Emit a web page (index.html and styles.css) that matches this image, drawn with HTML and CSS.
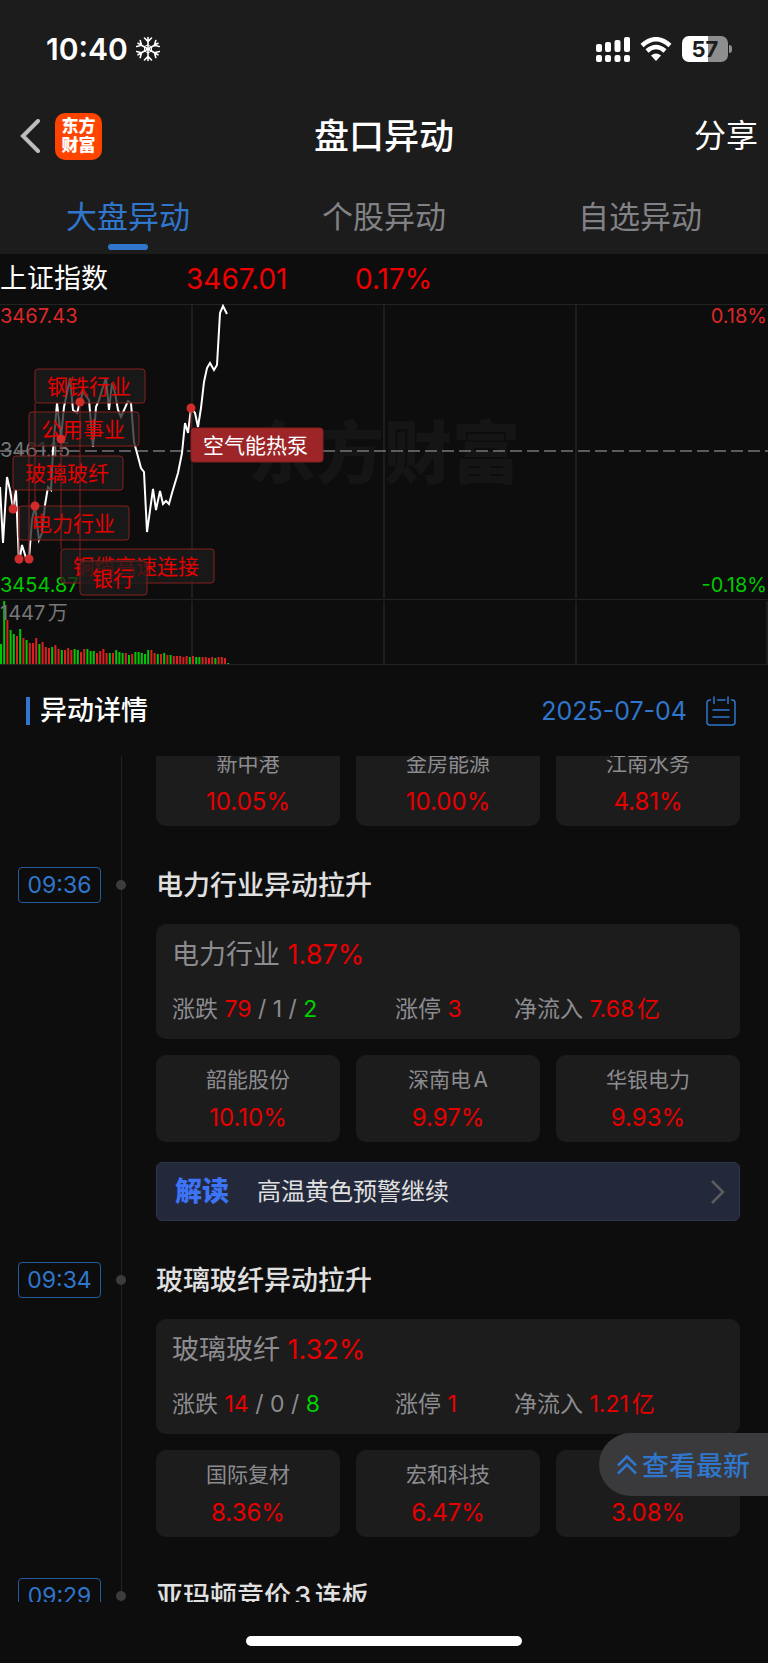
FILE: index.html
```
<!DOCTYPE html>
<html lang="zh-CN">
<head>
    <meta charset="UTF-8">
    <meta name="viewport" content="width=device-width, initial-scale=1.0">
    <title>盘口异动</title>
    <link rel="stylesheet" href="styles.css">
</head>
<body>

<header class="top">
    <div class="status-bar">
        <div class="status-time">
            <span>10:40</span>
            <svg width="24" height="26" viewBox="-12 -13 24 26" fill="none" stroke="#fff" stroke-width="1.600" stroke-linecap="round">
                <g id="arm"><path d="M0 0V-11.500M-3.500-11L0-7.500L3.500-11"/></g>
                <use href="#arm" transform="rotate(60)"/>
                <use href="#arm" transform="rotate(120)"/>
                <use href="#arm" transform="rotate(180)"/>
                <use href="#arm" transform="rotate(240)"/>
                <use href="#arm" transform="rotate(300)"/>
                <path stroke-width="1" d="M0-4L3.500-2V2L0 4L-3.500 2V-2Z"/>
            </svg>
        </div>
        <div class="status-icons">
            <svg width="34" height="25" viewBox="0 0 34 25" fill="#fff">
                <rect x="0" y="7" width="6" height="8" rx="2"/>
                <rect x="9" y="5" width="6" height="10" rx="2"/>
                <rect x="18.500" y="3" width="6" height="12" rx="2"/>
                <rect x="28" y="0" width="6" height="15" rx="2"/>
                <rect x="0" y="18" width="6" height="7" rx="2"/>
                <rect x="9" y="18" width="6" height="7" rx="2"/>
                <rect x="18.500" y="18" width="6" height="7" rx="2"/>
                <rect x="28" y="18" width="6" height="7" rx="2"/>
            </svg>
            <svg width="32" height="25" viewBox="0 0 32 25">
                <path d="M2 8.500Q16-4 30 8.500" fill="none" stroke="#fff" stroke-width="4.500"/>
                <path d="M7 14Q16 6 25 14" fill="none" stroke="#fff" stroke-width="4.500"/>
                <path d="M16 24L11 18.500Q16 14.500 21 18.500Z" fill="#fff"/>
            </svg>
            <div class="battery"><span>57</span></div>
        </div>
    </div>
    <div class="nav-bar">
        <div class="nav-left">
            <button class="back-btn" aria-label="返回">
                <svg width="20" height="34" viewBox="0 0 20 34" fill="none" stroke="#bdbdbd" stroke-width="4" stroke-linecap="round">
                    <path d="M18 2L3 17L18 32"/>
                </svg>
            </button>
            <div class="logo">东方<br>财富</div>
        </div>
        <h1>盘口异动</h1>
        <button class="share-btn">分享</button>
    </div>
    <nav class="tabs">
        <button class="tab active">大盘异动</button>
        <button class="tab">个股异动</button>
        <button class="tab">自选异动</button>
    </nav>
</header>

<section class="quote">
    <div class="quote-row">
        <span class="quote-name">上证指数</span>
        <span class="quote-price">3467.01</span>
        <span class="quote-pct">0.17%</span>
    </div>
    <svg class="chart" viewBox="0 304 768 362">
        <text class="watermark" x="384" y="478">东方财富</text>

        <!-- grid -->
        <path class="grid-line" d="M0 304.500H768M0 599.500H768M0 664.500H768"/>
        <path class="grid-line thick" d="M192 305V598M384 305V598M576 305V598M192 601V664M384 601V664M576 601V664M767 601V664"/>
        <path class="mid-line" d="M0 451H768"/>

        <!-- axis values -->
        <text class="axis up" x="0" y="323">3467.43</text>
        <text class="axis up end" x="767" y="323">0.18%</text>
        <text class="axis" x="0" y="457">3461.15</text>
        <text class="axis down" x="0" y="592">3454.87</text>
        <text class="axis down end" x="767" y="592">-0.18%</text>

        <g id="volume"></g>
        <text class="axis" x="0" y="620">1447万</text>

        <polyline class="price-line" points="0,487 3,543 7,477 10,490 13,508 16,490 19,563 22,545 26,558 29,559 32,520 35,506 39,540 42,533 45,505 48,487 51,490 53,450 57,403 61,438 64,407 67,393 70,378 73,410 77,413 80,402 83,392 89,400 93,447 96,407 99,400 103,387 106,378 109,410 112,383 115,393 118,410 121,417 128,401 131,403 134,442 137,453 141,468 144,472 147,532 153,489 156,510 160,491 163,504 166,501 169,504 172,493 178,473 182,453 185,423 188,433 191,408 195,413 198,427 201,408 204,382 207,368 210,363 214,370 217,365 220,313 223,306 227,314"/>

        <!-- event labels -->
        <g class="event">
            <rect x="19" y="506" width="110" height="34" rx="3"/>
            <path d="M19 506V559"/>
            <text x="31" y="531">电力行业</text>
        </g>
        <g class="event">
            <rect x="13" y="456" width="110" height="34" rx="3"/>
            <path d="M13 490V509"/>
            <text x="25" y="481">玻璃玻纤</text>
        </g>
        <g class="event">
            <rect x="29" y="412" width="110" height="34" rx="3"/>
            <path d="M29 446V559"/>
            <text x="41" y="437">公用事业</text>
        </g>
        <g class="event">
            <rect x="35" y="369" width="110" height="34" rx="3"/>
            <path d="M35 403V506"/>
            <text x="47" y="394">钢铁行业</text>
        </g>
        <g class="event">
            <rect x="61" y="549" width="153" height="34" rx="3"/>
            <path d="M61 439V549"/>
            <text x="73" y="574">铜缆高速连接</text>
        </g>
        <g class="event">
            <rect x="80" y="561" width="67" height="34" rx="3"/>
            <path d="M80 402V561"/>
            <text x="92" y="586">银行</text>
        </g>
        <g class="event current">
            <rect x="191" y="428" width="132" height="34" rx="3"/>
            <path d="M191 408V428"/>
            <text x="203" y="453">空气能热泵</text>
        </g>
        <g class="dots">
            <circle cx="13" cy="509" r="4.500"/>
            <circle cx="19" cy="559" r="4.500"/>
            <circle cx="29" cy="559" r="4.500"/>
            <circle cx="35" cy="506" r="4.500"/>
            <circle cx="61" cy="439" r="4.500"/>
            <circle cx="80" cy="402" r="4.500"/>
            <circle cx="191" cy="408" r="4.500"/>
        </g>
    </svg>
</section>

<div class="section-head">
    <h2>异动详情</h2>
    <button class="date-btn">
        2025-07-04
        <svg width="30" height="30" viewBox="0 0 30 30" fill="none" stroke="#2f76cc" stroke-width="1.500" stroke-linecap="round">
            <path d="M4.500 4H4Q1 4 1 7V26Q1 29 4 29H26Q29 29 29 26V7Q29 4 26 4H25.500M11.500 4H19M8 1V7.500M22 1V7.500M7 14H23M7 21H23"/>
        </svg>
    </button>
</div>

<main class="timeline">
    <article class="entry">
        <div class="rail"></div>
        <div class="entry-body">
            <div class="stocks">
                <div class="stock"><span>新中港</span><b>10.05%</b></div>
                <div class="stock"><span>金房能源</span><b>10.00%</b></div>
                <div class="stock"><span>江南水务</span><b>4.81%</b></div>
            </div>
        </div>
    </article>

    <article class="entry">
        <time class="time">09:36</time>
        <div class="rail"><i class="dot"></i></div>
        <div class="entry-body">
            <h3>电力行业异动拉升</h3>
            <div class="board">
                <div class="board-name">电力行业 <span class="up">1.87%</span></div>
                <div class="board-stats">
                    <span>涨跌 <span class="up">79</span> / 1 / <span class="down">2</span></span>
                    <span>涨停 <span class="up">3</span></span>
                    <span>净流入 <span class="up">7.68亿</span></span>
                </div>
            </div>
            <div class="stocks">
                <div class="stock"><span>韶能股份</span><b>10.10%</b></div>
                <div class="stock"><span>深南电A</span><b>9.97%</b></div>
                <div class="stock"><span>华银电力</span><b>9.93%</b></div>
            </div>
            <a class="insight" href="#">
                <strong>解读</strong>
                <span>高温黄色预警继续</span>
                <svg width="14" height="24" viewBox="0 0 14 24" fill="none" stroke="#5d5d5d" stroke-width="2.500">
                    <path d="M1 1L12 12L1 23"/>
                </svg>
            </a>
        </div>
    </article>

    <article class="entry">
        <time class="time">09:34</time>
        <div class="rail"><i class="dot"></i></div>
        <div class="entry-body">
            <h3>玻璃玻纤异动拉升</h3>
            <div class="board">
                <div class="board-name">玻璃玻纤 <span class="up">1.32%</span></div>
                <div class="board-stats">
                    <span>涨跌 <span class="up">14</span> / 0 / <span class="down">8</span></span>
                    <span>涨停 <span class="up">1</span></span>
                    <span>净流入 <span class="up">1.21亿</span></span>
                </div>
            </div>
            <div class="stocks">
                <div class="stock"><span>国际复材</span><b>8.36%</b></div>
                <div class="stock"><span>宏和科技</span><b>6.47%</b></div>
                <div class="stock"><span>&nbsp;</span><b>3.08%</b></div>
            </div>
        </div>
    </article>

    <article class="entry">
        <time class="time">09:29</time>
        <div class="rail"><i class="dot"></i></div>
        <div class="entry-body">
            <h3>亚玛顿竞价3连板</h3>
        </div>
    </article>
</main>

<button class="latest-btn">
    <svg width="20" height="20" viewBox="0 0 20 20" fill="none" stroke="#2f76cc" stroke-width="2.500">
        <path d="M1 10.500L10 1.500L19 10.500M1 18.500L10 9.500L19 18.500"/>
    </svg>
    查看最新
</button>

<footer class="home-bar"><span></span></footer>

<script src="chart.js"></script>
</body>
</html>
```
FILE: styles.css
```
* {
    box-sizing: border-box;
}
body {
    margin: 0;
    height: 100vh;
    display: flex;
    flex-direction: column;
    overflow: hidden;
    background-color: #0d0d0d;
    color: #fff;
    font-family: Inter, "Noto Sans CJK SC", sans-serif;
    text-autospace: normal;
}
h1, h2, h3 {
    margin: 0;
    font-weight: 500;
}
button {
    padding: 0;
    border: none;
    background: none;
    color: inherit;
    font-family: inherit;
    cursor: pointer;
}
svg {
    display: block;
    flex-shrink: 0;
}
.up {
    color: #e60000;
}
.down {
    color: #00d200;
}

/* header */
.top {
    background-color: #1c1c1c;
}
.status-bar {
    display: flex;
    justify-content: space-between;
    align-items: center;
    height: 98px;
    padding: 0 36px 0 46px;
}
.status-time {
    display: flex;
    align-items: center;
    gap: 8px;
    font-size: 30px;
    font-weight: 600;
}
.status-icons {
    display: flex;
    align-items: center;
    gap: 10px;
}
.battery {
    position: relative;
    width: 46px;
    height: 26px;
    margin-right: 4px;
    border-radius: 7px;
    background: linear-gradient(to right, #fff 57%, #8e8e8e 57%);
    color: #1c1c1c;
    font-size: 22px;
    font-weight: 700;
    line-height: 26px;
    text-align: center;
}
.battery::after {
    content: "";
    position: absolute;
    top: 9px;
    right: -4px;
    width: 3px;
    height: 8px;
    border-radius: 0 3px 3px 0;
    background-color: #8e8e8e;
}
.nav-bar {
    display: grid;
    grid-template-columns: 1fr auto 1fr;
    align-items: center;
    height: 76px;
    padding: 0 10px;
}
.nav-left {
    display: flex;
    align-items: center;
    gap: 15px;
    padding-left: 10px;
}
.logo {
    width: 47px;
    height: 47px;
    padding-top: 4px;
    border-radius: 10px;
    background-color: #ff4400;
    font-size: 17px;
    font-weight: 900;
    line-height: 19px;
    text-align: center;
}
.nav-bar h1 {
    font-size: 35px;
    line-height: 48px;
}
.share-btn {
    justify-self: end;
    font-size: 32px;
    line-height: 48px;
}
.tabs {
    display: flex;
    height: 80px;
}
.tab {
    flex: 1;
    display: flex;
    flex-direction: column;
    align-items: center;
    padding-top: 20px;
    color: #828286;
    font-size: 31px;
    line-height: 46px;
}
.tab.active {
    color: #2f76cc;
}
.tab.active::after {
    content: "";
    width: 40px;
    height: 6px;
    margin-top: 4px;
    border-radius: 3px;
    background-color: #2f76cc;
}

/* index quote and chart */
.quote-row {
    display: flex;
    align-items: center;
    height: 50px;
    font-size: 27px;
    line-height: 40px;
}
.quote-name {
    width: 186px;
}
.quote-price {
    width: 169px;
    color: #f00000;
}
.quote-pct {
    color: #f00000;
}
.quote-price, .quote-pct {
    font-size: 28px;
}
.chart {
    width: 100%;
    height: auto;
}
.grid-line {
    fill: none;
    stroke: #232323;
    stroke-width: 1;
}
.grid-line.thick {
    stroke: #1e1e1e;
    stroke-width: 2;
}
.mid-line {
    stroke: #77777a;
    stroke-width: 1.5;
    stroke-dasharray: 12 5;
}
.watermark {
    fill: #151515;
    font-size: 68px;
    font-weight: 900;
    text-anchor: middle;
}
.axis {
    fill: #77777a;
    font-size: 20px;
}
.axis.up {
    fill: #dc2828;
}
.axis.down {
    fill: #00c800;
}
.axis.end {
    text-anchor: end;
}
.price-line {
    fill: none;
    stroke: #fff;
    stroke-width: 2;
}
.event rect {
    fill: rgba(28, 28, 28, 0.75);
    stroke: #85201f;
}
.event path {
    stroke: #85201f;
}
.event text {
    fill: #e60000;
    font-size: 21px;
}
.event.current rect {
    fill: #9d2427;
}
.event.current text {
    fill: #fff;
}
.dots {
    fill: #d02c2c;
}
.vol-up {
    fill: #dc1e1e;
}
.vol-down {
    fill: #00c800;
}

/* section title */
.section-head {
    display: flex;
    justify-content: space-between;
    align-items: center;
    height: 90px;
    flex-shrink: 0;
    padding: 0 32px 0 26px;
}
.section-head h2 {
    display: flex;
    align-items: center;
    gap: 10px;
    font-size: 27px;
    line-height: 40px;
}
.section-head h2::before {
    content: "";
    width: 4px;
    height: 28px;
    background-color: #2f76cc;
}
.date-btn {
    display: flex;
    align-items: center;
    gap: 19px;
    color: #2f76cc;
    font-size: 25px;
}

/* timeline, scrolled a little past its first cards */
.timeline {
    flex: 1;
    min-height: 0;
    overflow: hidden;
}
.entry {
    display: grid;
    grid-template-columns: 83px 40px 1fr;
    padding: 0 28px 0 18px;
}
.entry:first-child {
    margin-top: -17px;
}
.rail {
    grid-column: 2;
    background: linear-gradient(#222, #222) center / 1px 100% no-repeat;
}
.entry-body {
    grid-column: 3;
    padding-left: 15px;
}
.time {
    height: 36px;
    margin-top: 41px;
    border: 1px solid #245b9e;
    border-radius: 4px;
    color: #2f76cc;
    font-size: 23px;
    line-height: 34px;
    text-align: center;
}
.dot {
    display: block;
    width: 10px;
    height: 10px;
    margin: 54px auto 0;
    border-radius: 50%;
    background-color: #3c3c3c;
}
.entry h3 {
    padding: 41px 0 19px;
    color: #e0e0e0;
    font-size: 27px;
    line-height: 38px;
}
.board {
    display: grid;
    gap: 14px;
    margin-bottom: 16px;
    padding: 11px 16px 10px;
    border-radius: 10px;
    background-color: #1c1c1c;
    color: #8c8c90;
    line-height: 40px;
}
.board-name {
    font-size: 27px;
}
.board-stats {
    display: grid;
    grid-template-columns: 223px 119px 1fr;
    font-size: 23px;
    white-space: nowrap;
}
.stocks {
    display: grid;
    grid-template-columns: repeat(3, 1fr);
    gap: 16px;
}
.stock {
    display: grid;
    gap: 4px;
    padding: 8px 8px 7px;
    border-radius: 10px;
    background-color: #1c1c1c;
    color: #8c8c90;
    font-size: 21px;
    line-height: 34px;
    text-align: center;
}
.stock b {
    color: #e60000;
    font-size: 24px;
    font-weight: 400;
}
.insight {
    display: flex;
    align-items: center;
    height: 59px;
    margin-top: 20px;
    padding: 0 14px 0 18px;
    border: 1px solid #2c354c;
    border-radius: 6px;
    background-color: #23293b;
    color: #e0e0e0;
    font-size: 24px;
    line-height: 56px;
    text-decoration: none;
}
.insight strong {
    margin-right: 28px;
    color: #3d73f5;
    font-size: 27px;
    font-weight: 900;
}
.insight svg {
    margin-left: auto;
}

/* floating button */
.latest-btn {
    position: fixed;
    right: 0;
    bottom: 167px;
    display: flex;
    align-items: center;
    gap: 5px;
    height: 63px;
    padding: 0 18px;
    border-radius: 32px 0 0 32px;
    background-color: #3a3a3c;
    color: #2f76cc;
    font-size: 27px;
    font-weight: 500;
}
.home-bar {
    height: 61px;
    padding-top: 34px;
}
.home-bar span {
    display: block;
    width: 36%;
    height: 10px;
    margin: 0 auto;
    border-radius: 5px;
    background-color: #fff;
}
```
FILE: chart.js
```
// volume per minute: height + direction (r = up, g = down)
const volumes = '20g 63g 44r 34g 30g 28r 35g 26r 24g 21r 21r 26r 20g 22r 17r 16r 17g 19r 15r 14g 14r 16r 14r 15g 14g 12r 15r 15g 13g 13g 11r 13r 15r 11r 11g 11r 14g 12g 11g 11r 9g 10r 12g 12g 11g 10g 14g 14r 11r 10g 10r 11g 9r 9g 8r 8r 8r 7r 8r 7g 8r 7g 7g 7r 7r 6r 7r 6g 7r 7r 6r 1g'.split(' ');

const volume = document.getElementById('volume');
volumes.forEach((item, i) => {
    const h = parseInt(item);
    const bar = document.createElementNS('http://www.w3.org/2000/svg', 'rect');
    bar.setAttribute('x', i * 3.2);
    bar.setAttribute('y', 664 - h);
    bar.setAttribute('width', 2);
    bar.setAttribute('height', h);
    bar.setAttribute('class', item.endsWith('r') ? 'vol-up' : 'vol-down');
    volume.appendChild(bar);
});
```
